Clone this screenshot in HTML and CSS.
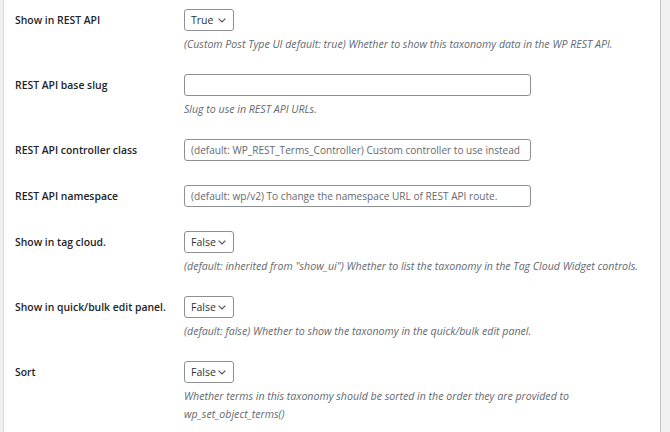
FILE: index.html
```html
<!DOCTYPE html>
<html lang="en">
<head>
<meta charset="utf-8">
<title>Taxonomy settings</title>
<link rel="stylesheet" href="styles.css">
</head>
<body>
<div class="panel">
  <div class="row">
    <div class="label">Show in REST API</div>
    <div class="field">
      <div class="select"><span>True</span><svg class="chev" viewBox="0 0 8 5" width="8" height="5"><path d="M0.6 0.6 L4 4 L7.4 0.6" fill="none" stroke="#50575e" stroke-width="1.2"/></svg></div>
      <p class="desc">(Custom Post Type UI default: true) Whether to show this taxonomy data in the WP REST API.</p>
    </div>
  </div>
  <div class="row">
    <div class="label">REST API base slug</div>
    <div class="field">
      <div class="input"></div>
      <p class="desc">Slug to use in REST API URLs.</p>
    </div>
  </div>
  <div class="row">
    <div class="label">REST API controller class</div>
    <div class="field nodesc">
      <div class="input"><span class="ph">(default: WP_REST_Terms_Controller) Custom controller to use instead</span></div>
    </div>
  </div>
  <div class="row">
    <div class="label">REST API namespace</div>
    <div class="field nodesc">
      <div class="input"><span class="ph">(default: wp/v2) To change the namespace URL of REST API route.</span></div>
    </div>
  </div>
  <div class="row">
    <div class="label">Show in tag cloud.</div>
    <div class="field">
      <div class="select"><span>False</span><svg class="chev" viewBox="0 0 8 5" width="8" height="5"><path d="M0.6 0.6 L4 4 L7.4 0.6" fill="none" stroke="#50575e" stroke-width="1.2"/></svg></div>
      <p class="desc">(default: inherited from "show_ui") Whether to list the taxonomy in the Tag Cloud Widget controls.</p>
    </div>
  </div>
  <div class="row">
    <div class="label">Show in quick/bulk edit panel.</div>
    <div class="field">
      <div class="select"><span>False</span><svg class="chev" viewBox="0 0 8 5" width="8" height="5"><path d="M0.6 0.6 L4 4 L7.4 0.6" fill="none" stroke="#50575e" stroke-width="1.2"/></svg></div>
      <p class="desc">(default: false) Whether to show the taxonomy in the quick/bulk edit panel.</p>
    </div>
  </div>
  <div class="row">
    <div class="label">Sort</div>
    <div class="field">
      <div class="select"><span>False</span><svg class="chev" viewBox="0 0 8 5" width="8" height="5"><path d="M0.6 0.6 L4 4 L7.4 0.6" fill="none" stroke="#50575e" stroke-width="1.2"/></svg></div>
      <p class="desc narrow">Whether terms in this taxonomy should be sorted in the order they are provided to wp_set_object_terms()</p>
    </div>
  </div>
</div>
</body>
</html>
```
FILE: styles.css
```css
* { box-sizing: border-box; }
html, body { margin: 0; padding: 0; }
body {
  background: #f0f0f1;
  font-family: "Open Sans", "Noto Sans", sans-serif;
  color: #1d2327;
  height: 432px;
  overflow: hidden;
}
.panel {
  margin-left: 3px;
  margin-right: 9px;
  height: 432px;
  background: #fff;
  border-left: 1px solid #dcdcde;
  border-right: 1px solid #c3c4c7;
  padding: 9px 0 0 11px;
  display: flex;
  flex-direction: column;
  gap: 21px;
}
.row {
  display: grid;
  grid-template-columns: 169px 1fr;
}
.label {
  font-size: 10.4px;
  font-weight: 600;
  line-height: 22px;
  color: #1d2327;
}
.field.nodesc { padding-bottom: 3px; }
.select {
  width: 50px;
  height: 22px;
  border: 1px solid #8c8f94;
  border-radius: 3px;
  display: flex;
  align-items: center;
  justify-content: space-between;
  padding: 0 7px 0 6px;
  font-size: 10.5px;
  color: #2c3338;
  background: #fff;
}
.chev { display: block; }
.input {
  width: 347px;
  height: 22px;
  border: 1px solid #8c8f94;
  border-radius: 3px;
  background: #fff;
  display: flex;
  align-items: center;
  padding: 0 6px;
}
.ph {
  font-size: 10.1px;
  color: #646970;
  white-space: nowrap;
}
.desc {
  margin: 4px 0 0;
  font-size: 10.6px;
  font-style: italic;
  line-height: 18px;
  color: #646970;
}
.desc.narrow { max-width: 440px; }
```
